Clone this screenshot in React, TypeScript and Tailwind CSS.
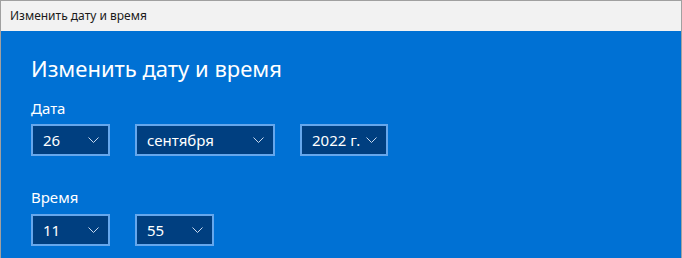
import React from 'react'

const font = { fontFamily: '"Noto Sans", "Open Sans", sans-serif' }

function Chevron() {
  return (
    <svg width="11" height="6" viewBox="0 0 11 6" fill="none" className="shrink-0">
      <path d="M0.5 0.5 L5.5 5.5 L10.5 0.5" stroke="#c9d9ee" strokeWidth="1" />
    </svg>
  )
}

interface SelectBoxProps {
  value: string
  width: string
}

function SelectBox({ value, width }: SelectBoxProps) {
  return (
    <div
      className={`flex h-[32px] items-center justify-between border-2 border-[#66a7ec] bg-[#003f80] pl-[10px] pr-[9px] ${width}`}
    >
      <span className="text-[15px] leading-none text-white">{value}</span>
      <Chevron />
    </div>
  )
}

export default function App() {
  return (
    <div className="flex h-[258px] w-[682px] flex-col border-l border-r border-t border-[#a0a0a0]" style={font}>
      {/* title bar */}
      <div className="flex h-[30px] items-center bg-[#f2f2f2] pl-[9px] text-[12px] text-[#1a1a1a]">
        Изменить дату и время
      </div>

      {/* content */}
      <div className="flex flex-1 flex-col bg-[#0071d4] pl-[30px] text-white">
        <div className="mt-[21px] text-[22px] leading-[32px]">Изменить дату и время</div>

        <div className="mt-[14px] text-[15px] leading-[20px]">Дата</div>
        <div className="mt-[6px] flex gap-[25px]">
          <SelectBox value="26" width="w-[79px]" />
          <SelectBox value="сентября" width="w-[140px]" />
          <SelectBox value="2022 г." width="w-[88px]" />
        </div>

        <div className="mt-[31px] text-[15px] leading-[20px]">Время</div>
        <div className="mt-[7px] flex gap-[25px]">
          <SelectBox value="11" width="w-[79px]" />
          <SelectBox value="55" width="w-[79px]" />
        </div>
      </div>
    </div>
  )
}
